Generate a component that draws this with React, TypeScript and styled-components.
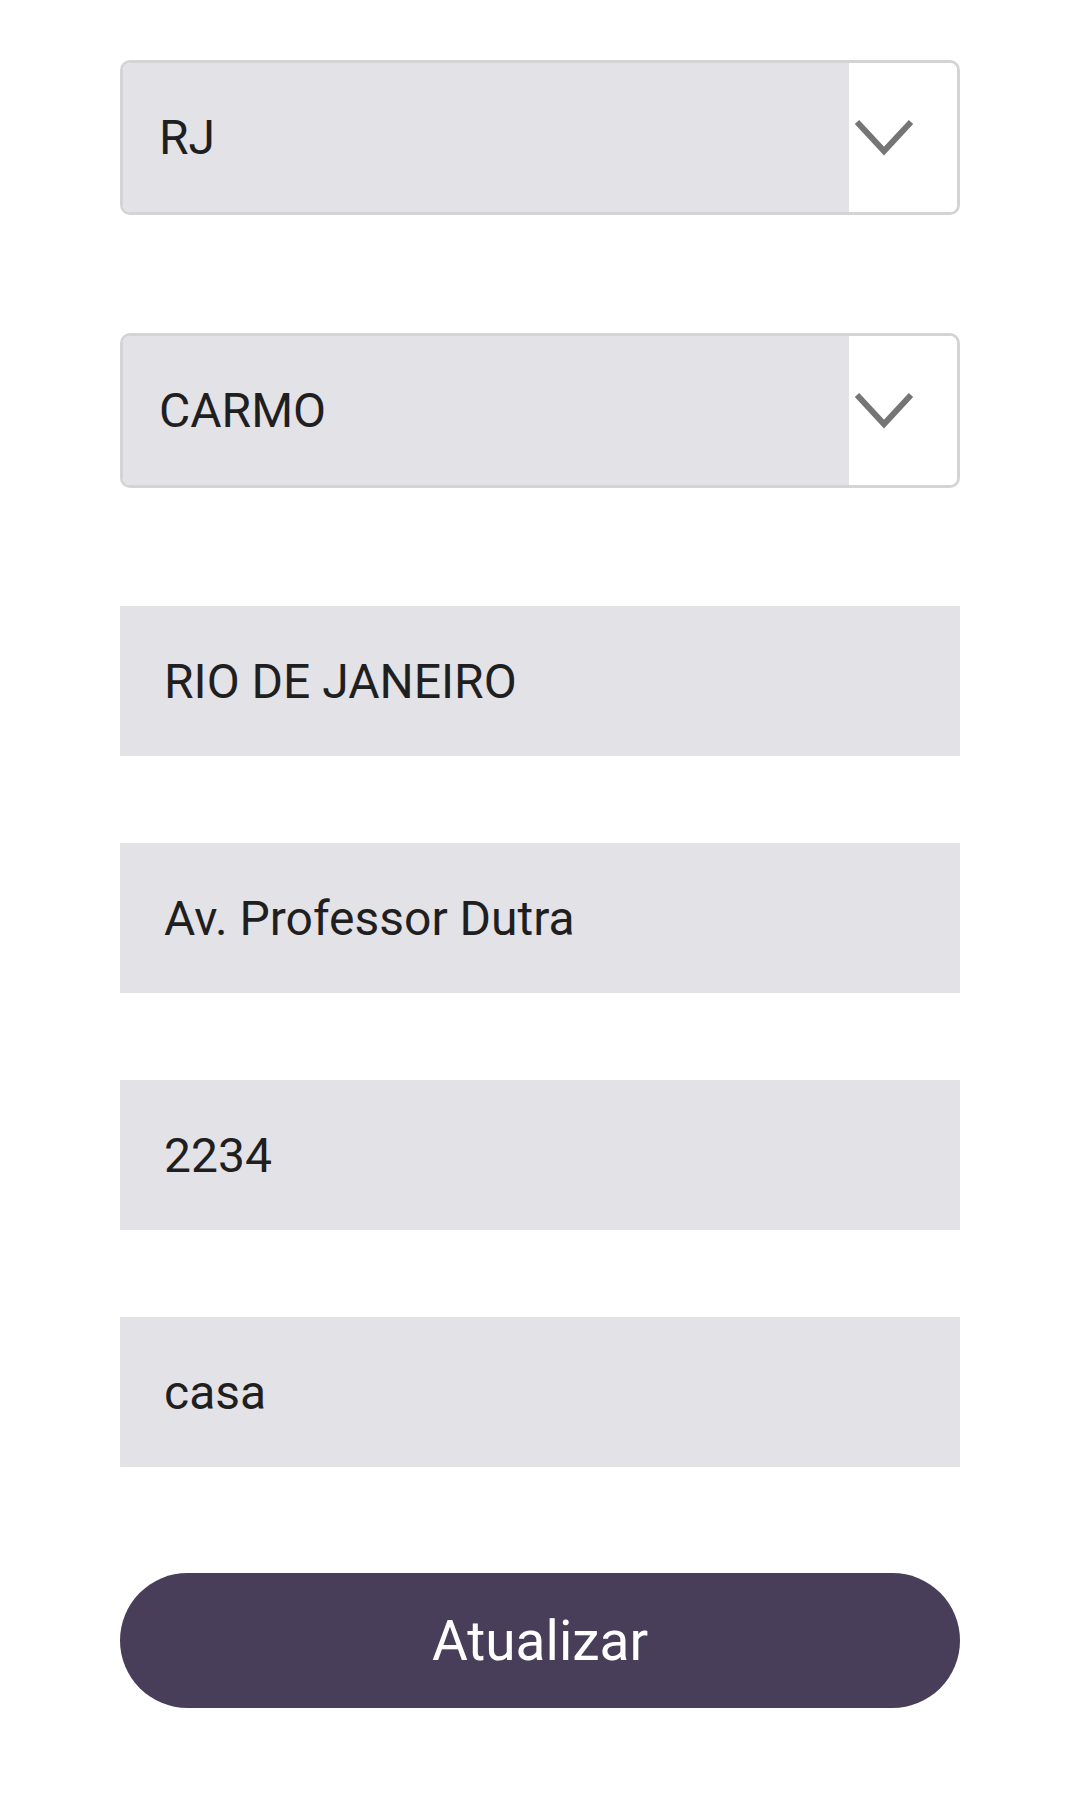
import React from 'react'
import styled, { createGlobalStyle } from 'styled-components'

const GlobalStyle = createGlobalStyle`
    body {
        margin: 0;
        background: #ffffff;
        font-family: Roboto, "Liberation Sans", sans-serif;
    }
`

const Form = styled.form`
    width: 840px;
    padding: 60px 0 0 120px;
    display: flex;
    flex-direction: column;
`

const SelectBox = styled.div`
    height: 155px;
    box-sizing: border-box;
    border: 3px solid #d4d4d4;
    border-radius: 10px;
    overflow: hidden;
    display: flex;
    margin-bottom: 118px;
`

const SelectValue = styled.div`
    flex: 1;
    background: #e3e2e7;
    display: flex;
    align-items: center;
    padding-left: 36px;
    font-size: 48px;
    color: #1f1f1f;
`

const Arrow = styled.div`
    width: 108px;
    box-sizing: border-box;
    background: #ffffff;
    display: flex;
    align-items: center;
    padding-left: 5px;
`

const Field = styled.div`
    height: 150px;
    background: #e3e2e7;
    display: flex;
    align-items: center;
    padding-left: 44px;
    font-size: 48px;
    color: #1f1f1f;
    margin-bottom: ${(p: { gap: number }) => p.gap}px;
`

const Button = styled.button`
    height: 135px;
    border: none;
    border-radius: 68px;
    background: #483e59;
    color: #ffffff;
    font-family: Roboto, "Liberation Sans", sans-serif;
    font-size: 55px;
    cursor: pointer;
`

const Chevron = () => (
    <svg width="60" height="38" viewBox="0 0 60 38">
        <polyline points="3,3 30,32 57,3" fill="none" stroke="#757575" strokeWidth="6" />
    </svg>
)

const Select = ({ value }: { value: string }) => (
    <SelectBox>
        <SelectValue>{value}</SelectValue>
        <Arrow><Chevron /></Arrow>
    </SelectBox>
)

const App = () => {
    const fields = ['RIO DE JANEIRO', 'Av. Professor Dutra', '2234', 'casa']

    return (
        <>
            <GlobalStyle />
            <Form onSubmit={(e) => e.preventDefault()}>
                <Select value="RJ" />
                <Select value="CARMO" />
                {fields.map((f, i) => (
                    <Field key={f} gap={i === fields.length - 1 ? 106 : 87}>{f}</Field>
                ))}
                <Button type="submit">Atualizar</Button>
            </Form>
        </>
    )
}

export default App
